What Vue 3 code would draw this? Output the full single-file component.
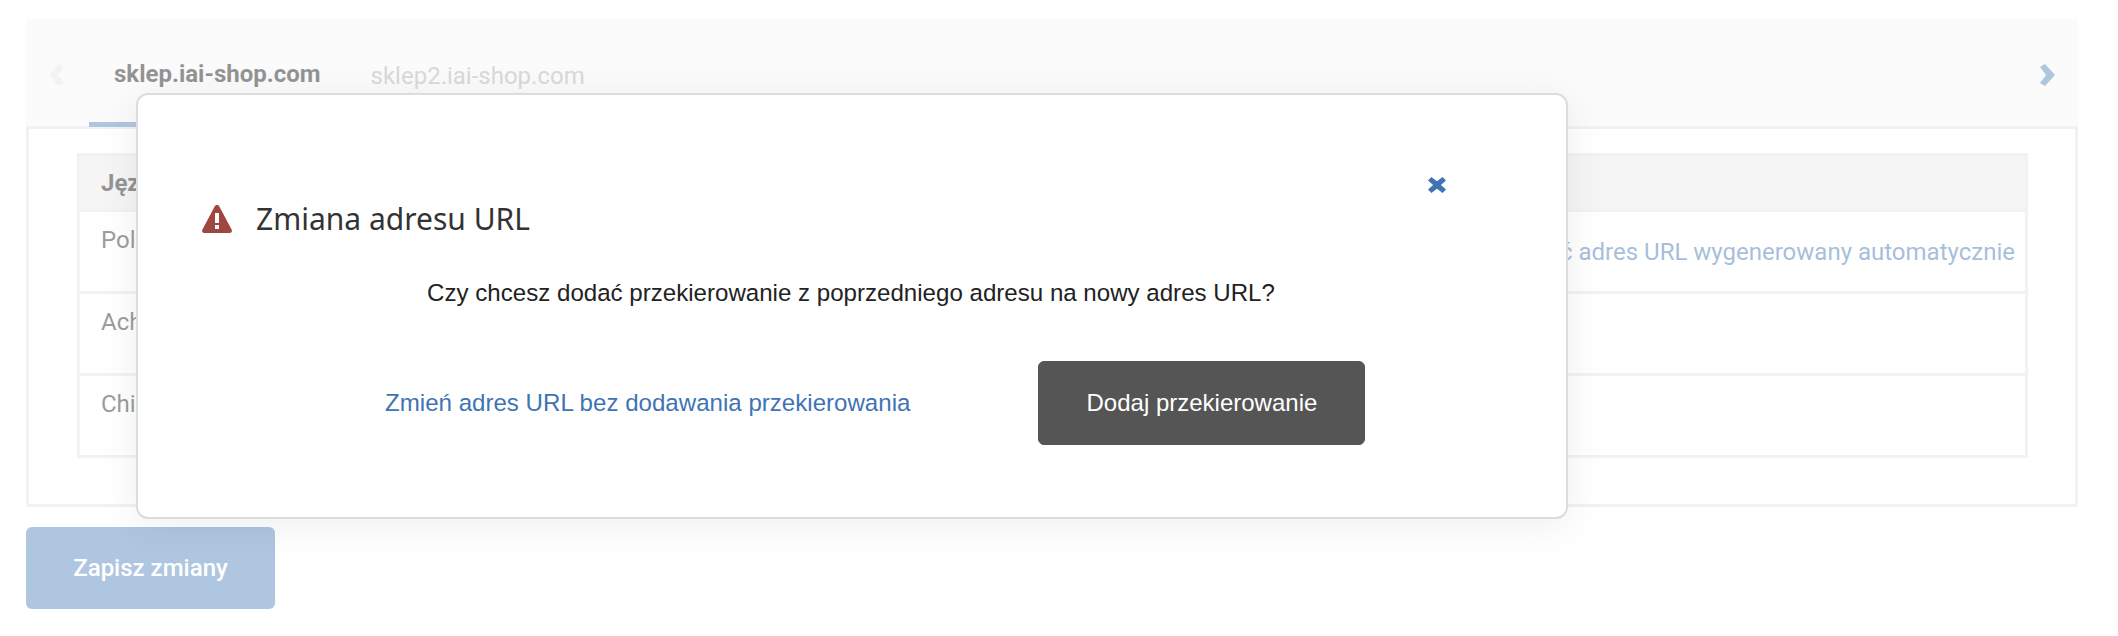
<script setup>
const rows = [
  { name: 'Polski', link: 'Przywróć adres URL wygenerowany automatycznie' },
  { name: 'Achinese', link: '' },
  { name: 'Chiński', link: '' }
]
</script>

<template>
  <div class="page">
    <section class="panel">
      <div class="tabs">
        <svg class="chev chev-left" viewBox="0 0 15 22"><path d="M10 0l5 3-6 8 6 8-5 3-10-11z" /></svg>
        <div class="tab active">sklep.iai-shop.com</div>
        <div class="tab">sklep2.iai-shop.com</div>
        <svg class="chev chev-right" viewBox="0 0 15 22"><path d="M5 0l-5 3 6 8-6 8 5 3 10-11z" /></svg>
      </div>
      <div class="body">
        <table class="table">
          <thead>
            <tr><th>Język</th><th></th></tr>
          </thead>
          <tbody>
            <tr v-for="r in rows" :key="r.name">
              <td class="name">{{ r.name }}</td>
              <td class="action"><a v-if="r.link">{{ r.link }}</a></td>
            </tr>
          </tbody>
        </table>
      </div>
    </section>
    <button class="save">Zapisz zmiany</button>

    <div class="backdrop"></div>
    <div class="modal">
      <svg class="close" viewBox="0 0 18 16"><path d="M3.4 0L9 4.3 14.600 0 18 3.600 12.900 8 18 12.400 14.600 16 9 11.700 3.400 16 0 12.400 5.100 8 0 3.600z" /></svg>
      <h2 class="title">
        <svg class="warn" viewBox="0 0 30 28">
          <path d="M15 0c1 0 1.700.5 2.200 1.300l12.500 23.500c.7 1.500-.2 3.200-1.900 3.200H2.200C.5 28-.4 26.300.3 24.800L12.800 1.300C13.300.5 14 0 15 0z" />
          <rect x="13" y="8" width="4" height="10" fill="#fff" />
          <rect x="13" y="20" width="4" height="4" fill="#fff" />
        </svg>
        Zmiana adresu URL
      </h2>
      <p class="question">Czy chcesz dodać przekierowanie z poprzedniego adresu na nowy adres URL?</p>
      <div class="footer">
        <a class="link">Zmień adres URL bez dodawania przekierowania</a>
        <button class="primary">Dodaj przekierowanie</button>
      </div>
    </div>
  </div>
</template>

<style>
html, body { margin: 0; background: #fff; }
</style>

<style scoped>
.page {
  position: relative;
  width: 2118px;
  height: 636px;
  overflow: hidden;
  padding: 19px 40px 0 26px;
  box-sizing: border-box;
  font-family: Roboto, sans-serif;
  color: #555;
}
.panel {
  width: 2052px;
  height: 488px;
  box-sizing: border-box;
  border: 3px solid #e2e2e2;
  border-top: 0;
  display: flex;
  flex-direction: column;
}
.tabs {
  height: 110px;
  box-sizing: border-box;
  flex: none;
  margin: 0 -3px;
  padding-left: 63px;
  background: #f5f5f5;
  border-bottom: 3px solid #e2e2e2;
  display: flex;
  align-items: stretch;
  position: relative;
}
.chev { position: absolute; width: 15px; height: 22px; top: 45px; }
.chev-left { left: 23px; fill: #e4e4e4; }
.chev-right { right: 23px; fill: #4f80bd; }
.tab {
  padding: 39px 25px 0;
  font-size: 24px;
  line-height: 36px;
  color: #aaa;
  margin-bottom: -1px;
  box-sizing: border-box;
}
.tab.active {
  padding-top: 37px;
  font-weight: 700;
  color: #111;
  border-bottom: 5px solid #4f80bd;
}
.body { padding: 24px 47px 0 48px; }
.table {
  width: 100%;
  border-collapse: collapse;
  font-size: 24px;
  table-layout: fixed;
}
.table th, .table td { border: 3px solid #e2e2e2; box-sizing: border-box; }
.table th {
  height: 56px;
  background: #e8e8e8;
  text-align: left;
  padding: 0 21px;
  font-weight: 700;
  color: #111;
}
.table th + th, .table td + td { border-left: 0; }
.table th:first-child, .table td:first-child { border-right: 0; }
.table td { height: 82px; padding: 0; }
.name { vertical-align: top; padding: 13px 0 0 21px !important; line-height: 30px; color: #222; }
.action { text-align: right; padding-right: 10px !important; vertical-align: middle; }
.action a { color: #3a6fb0; }
.save {
  display: block;
  margin-top: 20px;
  width: 249px;
  height: 82px;
  border: 0;
  border-radius: 6px;
  background: #4f80bd;
  color: #fff;
  font: 500 24px Roboto, sans-serif;
}
.backdrop { position: absolute; inset: 0; background: rgba(255, 255, 255, .55); }
.modal {
  position: absolute;
  left: 136px;
  top: 93px;
  width: 1432px;
  height: 426px;
  box-sizing: border-box;
  background: #fff;
  border: 2px solid #dcdcdc;
  border-radius: 12px;
  box-shadow: 0 6px 40px rgba(0, 0, 0, .07);
}
.close { position: absolute; left: 1290px; top: 82px; width: 18px; height: 16px; fill: #3f74b4; }
.title {
  margin: 0;
  padding: 102px 0 0 64px;
  display: flex;
  align-items: center;
  gap: 24px;
  font: 400 30px/44px "Noto Sans", sans-serif;
  color: #333;
}
.warn { width: 30px; height: 28px; fill: #a04640; flex: none; }
.question {
  margin: 36px 0 0;
  padding-right: 2px;
  text-align: center;
  font: 24.1px/32px "Liberation Sans", sans-serif;
  color: #222;
}
.footer {
  margin-top: 52px;
  padding-left: 247px;
  display: flex;
  align-items: center;
  gap: 128px;
}
.link {
  font: 24.1px/32px "Liberation Sans", sans-serif;
  color: #3f74b4;
}
.primary {
  width: 327px;
  height: 84px;
  border: 1px solid #555;
  border-radius: 6px;
  background: #555;
  color: #fff;
  font: 24px "Liberation Sans", sans-serif;
}
</style>
